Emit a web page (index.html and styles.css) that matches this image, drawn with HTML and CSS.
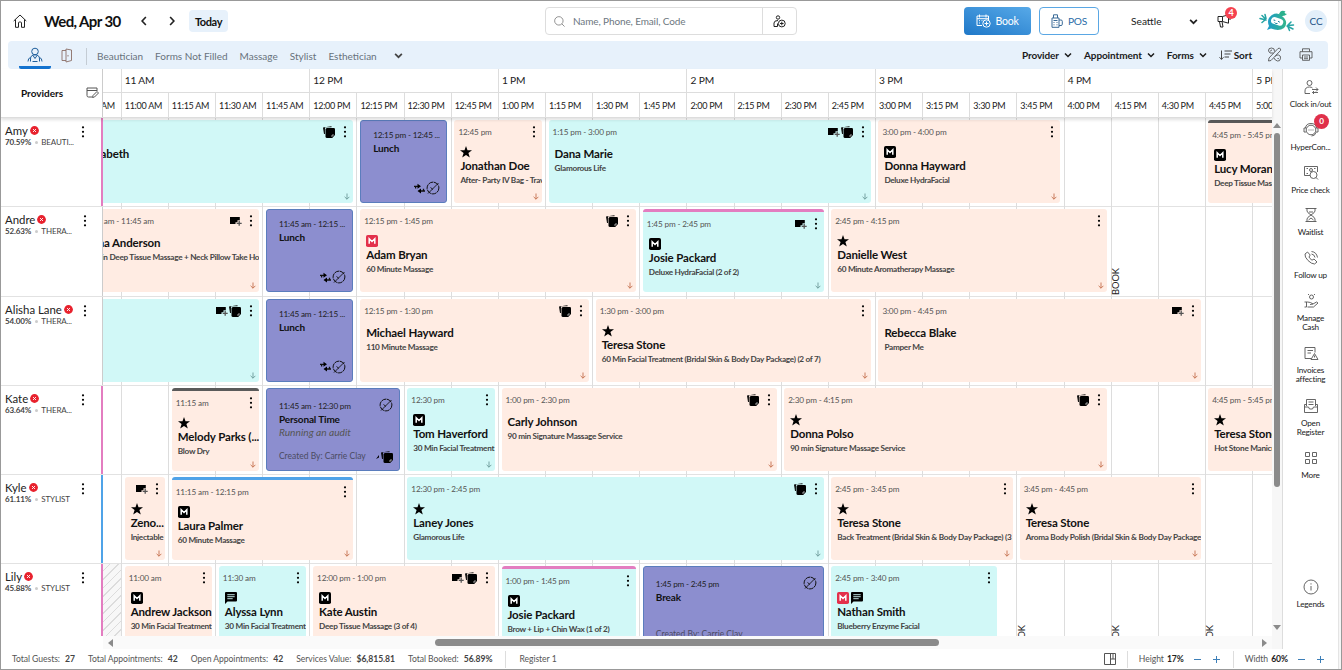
FILE: index.html
```
<!DOCTYPE html>
<html lang="en">

<head>
	<meta charset="UTF-8">
	<meta name="viewport" content="width=device-width, initial-scale=1.0">
	<title>Appointment Book</title>
	<link rel="stylesheet" href="styles.css">
</head>

<body>
	<!-- shared icons -->
	<svg class="sprite" width="0" height="0">
		<symbol id="dots" viewBox="0 0 4 14"><circle cx="2" cy="2.3" r="1.1"/><circle cx="2" cy="6.8" r="1.1"/><circle cx="2" cy="11.3" r="1.1"/></symbol>
		<symbol id="chevron" viewBox="0 0 8 8"><path d="M1 2.5l3 3 3-3" fill="none" stroke="currentColor" stroke-width="1.5"/></symbol>
		<symbol id="notes" viewBox="0 0 12 12"><path d="M0 1.500L8.500.2v1H3Q1.900 1.200 1.900 2.500V8H1z"/><path d="M4 2h6.800Q12 2 12 3.200V9L9.200 12H4Q2.500 12 2.500 10.500V3.500Q2.500 2 4 2z"/><path d="M9 11V9h2" fill="none" stroke="#fff" stroke-width=".6"/></symbol>
		<symbol id="cardplus" viewBox="0 0 12 10"><path d="M0 1h9.800v3.200H7.500v2H5.500V8H0z"/><path d="M9.200 4.800v5M6.700 7.300h5" stroke="currentColor" stroke-width="1.300"/></symbol>
		<symbol id="star" viewBox="0 0 12 12"><path d="M6 0l1.500 4.300H12L8.400 7l1.400 4.600L6 8.900l-3.800 2.700L3.600 7 0 4.300h4.500z"/></symbol>
		<symbol id="chat" viewBox="0 0 12 12"><path d="M1 0h10q1 0 1 1v7.500q0 1-1 1H2.500L0 12V1q0-1 1-1z"/><path d="M2.300 2.700h7.400M2.300 4.700h7.400M2.300 6.700h5.400" stroke="#d1f8f7" stroke-width=".9"/></symbol>
		<symbol id="member" viewBox="0 0 12 12"><rect width="12" height="12" rx="1.800"/><path d="M3.200 8.800V3.700L6 6.500l2.800-2.800v5.100" fill="none" stroke="#fff" stroke-width="1.500"/></symbol>
		<symbol id="down" viewBox="0 0 6 7"><path d="M3 .5v5.700M.6 3.800L3 6.200l2.400-2.400" fill="none" stroke="currentColor" stroke-width=".9"/></symbol>
		<symbol id="swap" viewBox="0 0 11 11"><path d="M0 3.300h4M1.600 3v2.500M11 8H6.500M9.500 8V5.800" fill="none" stroke="currentColor" stroke-width="1.300"/><path d="M3.500.8L7 3.300 3.500 5.800zM7 5.500v5L3.500 8z"/></symbol>
		<symbol id="blocked" viewBox="0 0 14 14"><circle cx="7" cy="7" r="5.900" fill="none" stroke="currentColor" stroke-dasharray="5 .6"/><path d="M2 12.500L12.500 2M4.500 6.500L7 8.500" fill="none" stroke="currentColor" stroke-width=".9"/></symbol>
		<symbol id="cross" viewBox="0 0 9 9"><circle cx="4.500" cy="4.500" r="4.400" fill="#e8222e"/><path d="M3 3l3 3M6 3L3 6" stroke="#fff" stroke-width=".9"/></symbol>
	</svg>

	<div class="app">
		<header class="topbar">
			<svg class="home" viewBox="0 0 14 14"><path d="M.7 7L7 1l6.300 6M2.500 5.600v7.700h3V9q0-1 1-1h1q1 0 1 1v4.300h3V5.600"/></svg>
			<h1>Wed, Apr 30</h1>
			<svg class="arrow prev" viewBox="0 0 8 8"><path d="M5.500.8L2.500 4l3 3.200"/></svg>
			<svg class="arrow next" viewBox="0 0 8 8"><path d="M2.500.8l3 3.200-3 3.200"/></svg>
			<button class="today">Today</button>
			<div class="search">
				<svg class="lens" viewBox="0 0 12 12"><circle cx="5.300" cy="5.300" r="4.600"/><path d="M8.600 8.600L11.500 11.500"/></svg>
				<span>Name, Phone, Email, Code</span>
				<div class="add-guest">
					<svg viewBox="0 0 13 13"><circle cx="5" cy="2.500" r="1.700"/><path d="M4.500 11.500H1V8q0-2.500 4-2.500M4.500 8.500v3"/><circle cx="8.800" cy="8.500" r="3.400"/><path d="M7 8.500h3.600M8.800 6.700v3.600"/></svg>
				</div>
			</div>
			<button class="book">
				<svg viewBox="0 0 15 14"><path d="M6 11.500H1V2h11.500v4M1 4.700h11.500M3.500.5v3M10 .5v3M3 6.700h1M5.500 6.700h1M3 9h1"/><circle cx="10.500" cy="9.500" r="3.700"/><path d="M8.500 9.500h4M10.500 7.500v4"/></svg>
				Book
			</button>
			<button class="pos">
				<svg viewBox="0 0 12 14"><path d="M2.500 4V.8h4V4M1 4h7v9.300H1zM8 6h2q1.300 0 1.300 1.300v3q0 1.200-1.300 1.200H8M2.500 6.500h4M2.500 8.500h1M5.500 8.500h1M2.500 10.800h1M5.500 10.800h1"/></svg>
				POS
			</button>
			<div class="center">Seattle <svg><use href="#chevron"/></svg></div>
			<div class="news">
				<svg viewBox="0 0 15 14"><path d="M1 2.500h4.500v5H1zM5.500 2.500L11.500.8v8.400L5.500 7.500M2.500 7.500L3.500 13H6L5 7.500M12 5h2"/></svg>
				<b>4</b>
			</div>
			<svg class="mascot" viewBox="0 0 36 22">
				<defs><linearGradient id="teal"><stop offset="0" stop-color="#1e9bc9"/><stop offset="1" stop-color="#34b58a"/></linearGradient></defs>
				<path d="M13 5q6-3.500 10.500 1.500Q30 12 25 18q-5 3.500-13 .5L8 20l2-4Q7 9 13 5z" fill="url(#teal)"/>
				<path d="M20 4q2-5 6.500-2.500Q24 3.500 28 4q-3 3-7 1.500z" fill="#2ab08c"/>
				<rect x="12" y="7.800" width="12.500" height="7" rx="3.500" fill="#fff" transform="rotate(18 18 11)"/>
				<path d="M14.500 10q1.500-.5 1.500 1M19 11.500q1.500-.5 1.500 1M15.500 12.500q1 1.500 3 1" stroke="#1e87a0" fill="none"/>
				<path d="M7 10L1 8.500M6.500 9L3 5.500M7 8.500L6 4.500M6 10l-3 2.500M28 16l6 3M29 15.500l5.500-.5M29 15l3-3M29 17l1.500 3.500" stroke="#25a4a4" stroke-width="1.500" stroke-linecap="round"/>
			</svg>
			<div class="avatar">CC</div>
		</header>

		<nav class="toolbar">
			<div class="tab active">
				<svg viewBox="0 0 16 16"><circle cx="8" cy="4.500" r="3.300"/><path d="M3.500 14.500V12q0-4.200 4.500-4.200t4.500 4.200v2.500M6 8.500l2 3 2-3M3.500 10.500Q1 11 1 14.500M12.500 10.500Q15 11 15 14.500M5.500 14.500h5"/></svg>
			</div>
			<svg class="door" viewBox="0 0 12 15"><path d="M5 2.500H1v10h4M5 1l5.500 1v10.500L5 14zM7 7v1.500"/></svg>
			<ul class="filters">
				<li>Beautician</li>
				<li>Forms Not Filled</li>
				<li>Massage</li>
				<li>Stylist</li>
				<li>Esthetician</li>
			</ul>
			<svg class="more-filters"><use href="#chevron"/></svg>
			<div class="menus">
				<span>Provider <svg><use href="#chevron"/></svg></span>
				<span>Appointment <svg><use href="#chevron"/></svg></span>
				<span>Forms <svg><use href="#chevron"/></svg></span>
				<span class="sort"><svg viewBox="0 0 13 10"><path d="M2.500.5v9M.5 7.300l2 2 2-2M5.500 1H13M5.500 4h6M5.500 7h4.500"/></svg>Sort</span>
				<svg class="tools" viewBox="0 0 15 15"><path d="M2 11L11 1.500q2-1 2.500.5T13 4L4 13.500l-2.500.5zM6.500 6Q2 7 1.500 4T4.500 1q3.500 0 3 3.500M8.500 9.500q.5-2 3-1.500t2 3.500-3 2.500-3.500-3M3.300 4.500Q3.500 3 5 3M10.500 11.500q1 .5 1.500-.5"/></svg>
				<svg class="print" viewBox="0 0 14 13"><path d="M3.500 3.500V.8h7v2.700M3.500 10H1V3.700h12V10h-2.500M3.500 7h7v5.300h-7zM5 9h4M5 10.700h4"/></svg>
			</div>
		</nav>

		<main>
			<section class="scheduler">
				<div class="head">
					<div class="head-providers">
						<b>Providers</b>
						<svg viewBox="0 0 13 12"><path d="M6 10H2.500Q1 10 1 8.500V1h10v3M1 3.500h10M6.500 10.500l.5-2 4-4L12.500 6l-4 4z"/></svg>
					</div>
					<div class="times">
						<div class="hours">
							<span></span><span>11 AM</span><span>12 PM</span><span>1 PM</span><span>2 PM</span><span>3 PM</span><span>4 PM</span><span>5 PM</span>
						</div>
						<div class="quarters">
							<span></span><span>10:45 AM</span>
							<span>11:00 AM</span><span>11:15 AM</span><span>11:30 AM</span><span>11:45 AM</span>
							<span>12:00 PM</span><span>12:15 PM</span><span>12:30 PM</span><span>12:45 PM</span>
							<span>1:00 PM</span><span>1:15 PM</span><span>1:30 PM</span><span>1:45 PM</span>
							<span>2:00 PM</span><span>2:15 PM</span><span>2:30 PM</span><span>2:45 PM</span>
							<span>3:00 PM</span><span>3:15 PM</span><span>3:30 PM</span><span>3:45 PM</span>
							<span>4:00 PM</span><span>4:15 PM</span><span>4:30 PM</span><span>4:45 PM</span>
							<span>5:00 PM</span>
						</div>
					</div>
				</div>

				<div class="body">
					<div class="lines">
						<i></i><i></i><i></i><i></i><i></i><i></i><i></i><i></i><i></i><i></i><i></i><i></i><i></i><i></i><i></i><i></i><i></i><i></i><i></i><i></i><i></i><i></i><i></i><i></i><i></i><i></i><i></i>
					</div>
					<div class="rows">

						<div class="row">
							<div class="provider pink">
								<p>Amy <svg><use href="#cross"/></svg></p>
								<small><b>70.59%</b><i></i>BEAUTI...</small>
								<svg class="menu"><use href="#dots"/></svg>
							</div>
							<div class="lane">
								<article class="appt cyan" style="grid-column: 4 / 22">
									<div class="line"><time></time><svg class="notes"><use href="#notes"/></svg><svg class="dots"><use href="#dots"/></svg></div>
									<h3>Elizabeth</h3>
									<svg class="down"><use href="#down"/></svg>
								</article>
								<article class="block" style="grid-column: 22 / 28">
									<time>12:15 pm - 12:45 ...</time>
									<h3>Lunch</h3>
									<div class="corner"><svg class="swap"><use href="#swap"/></svg><svg class="blocked"><use href="#blocked"/></svg></div>
								</article>
								<article class="appt" style="grid-column: 28 / 34">
									<div class="line"><time>12:45 pm</time><svg class="dots"><use href="#dots"/></svg></div>
									<div class="tags"><svg><use href="#star"/></svg></div>
									<h3>Jonathan Doe</h3>
									<p>After- Party IV Bag - Travel</p>
									<svg class="down"><use href="#down"/></svg>
								</article>
								<article class="appt cyan" style="grid-column: 34 / 55">
									<div class="line"><time>1:15 pm - 3:00 pm</time><svg class="card"><use href="#cardplus"/></svg><svg class="notes"><use href="#notes"/></svg><svg class="dots"><use href="#dots"/></svg></div>
									<h3>Dana Marie</h3>
									<p>Glamorous Life</p>
									<svg class="down"><use href="#down"/></svg>
								</article>
								<article class="appt" style="grid-column: 55 / 67">
									<div class="line"><time>3:00 pm - 4:00 pm</time><svg class="dots"><use href="#dots"/></svg></div>
									<div class="tags"><svg><use href="#member"/></svg></div>
									<h3>Donna Hayward</h3>
									<p>Deluxe HydraFacial</p>
									<svg class="down"><use href="#down"/></svg>
								</article>
								<article class="appt bar-dark" style="grid-column: 76 / 88">
									<div class="line"><time>4:45 pm - 5:45 pm</time></div>
									<div class="tags"><svg><use href="#member"/></svg></div>
									<h3>Lucy Moran</h3>
									<p>Deep Tissue Massage</p>
								</article>
							</div>
						</div>

						<div class="row">
							<div class="provider">
								<p>Andre <svg><use href="#cross"/></svg></p>
								<small><b>52.63%</b><i></i>THERA...</small>
								<svg class="menu"><use href="#dots"/></svg>
							</div>
							<div class="lane">
								<article class="appt" style="grid-column: 4 / 16">
									<div class="line"><time>10:45 am - 11:45 am</time><svg class="card"><use href="#cardplus"/></svg><svg class="dots"><use href="#dots"/></svg></div>
									<h3>Anna Anderson</h3>
									<p>90 Min Deep Tissue Massage + Neck Pillow Take Home</p>
									<svg class="down"><use href="#down"/></svg>
								</article>
								<article class="block" style="grid-column: 16 / 22">
									<time>11:45 am - 12:15 ...</time>
									<h3>Lunch</h3>
									<div class="corner"><svg class="swap"><use href="#swap"/></svg><svg class="blocked"><use href="#blocked"/></svg></div>
								</article>
								<article class="appt" style="grid-column: 22 / 40">
									<div class="line"><time>12:15 pm - 1:45 pm</time><svg class="notes"><use href="#notes"/></svg><svg class="dots"><use href="#dots"/></svg></div>
									<div class="tags"><svg class="red"><use href="#member"/></svg></div>
									<h3>Adam Bryan</h3>
									<p>60 Minute Massage</p>
									<svg class="down"><use href="#down"/></svg>
								</article>
								<article class="appt cyan bar-pink" style="grid-column: 40 / 52">
									<div class="line"><time>1:45 pm - 2:45 pm</time><svg class="card"><use href="#cardplus"/></svg><svg class="dots"><use href="#dots"/></svg></div>
									<div class="tags"><svg><use href="#member"/></svg></div>
									<h3>Josie Packard</h3>
									<p>Deluxe HydraFacial (2 of 2)</p>
									<svg class="down"><use href="#down"/></svg>
								</article>
								<article class="appt" style="grid-column: 52 / 70">
									<div class="line"><time>2:45 pm - 4:15 pm</time><svg class="dots"><use href="#dots"/></svg></div>
									<div class="tags"><svg><use href="#star"/></svg></div>
									<h3>Danielle West</h3>
									<p>60 Minute Aromatherapy Massage</p>
									<svg class="down"><use href="#down"/></svg>
								</article>
								<span class="free" style="grid-column: 70 / 73">BOOK</span>
							</div>
						</div>

						<div class="row">
							<div class="provider">
								<p>Alisha Lane <svg><use href="#cross"/></svg></p>
								<small><b>54.00%</b><i></i>THERA...</small>
								<svg class="menu"><use href="#dots"/></svg>
							</div>
							<div class="lane">
								<article class="appt cyan" style="grid-column: 1 / 16">
									<div class="line"><time></time><svg class="card"><use href="#cardplus"/></svg><svg class="notes"><use href="#notes"/></svg><svg class="dots"><use href="#dots"/></svg></div>
									<svg class="down"><use href="#down"/></svg>
								</article>
								<article class="block" style="grid-column: 16 / 22">
									<time>11:45 am - 12:15 ...</time>
									<h3>Lunch</h3>
									<div class="corner"><svg class="swap"><use href="#swap"/></svg><svg class="blocked"><use href="#blocked"/></svg></div>
								</article>
								<article class="appt" style="grid-column: 22 / 37">
									<div class="line"><time>12:15 pm - 1:30 pm</time><svg class="notes"><use href="#notes"/></svg><svg class="dots"><use href="#dots"/></svg></div>
									<h3>Michael Hayward</h3>
									<p>110 Minute Massage</p>
									<svg class="down"><use href="#down"/></svg>
								</article>
								<article class="appt" style="grid-column: 37 / 55">
									<div class="line"><time>1:30 pm - 3:00 pm</time><svg class="dots"><use href="#dots"/></svg></div>
									<div class="tags"><svg><use href="#star"/></svg></div>
									<h3>Teresa Stone</h3>
									<p>60 Min Facial Treatment (Bridal Skin &amp; Body Day Package) (2 of 7)</p>
									<svg class="down"><use href="#down"/></svg>
								</article>
								<article class="appt" style="grid-column: 55 / 76">
									<div class="line"><time>3:00 pm - 4:45 pm</time><svg class="card"><use href="#cardplus"/></svg><svg class="dots"><use href="#dots"/></svg></div>
									<h3>Rebecca Blake</h3>
									<p>Pamper Me</p>
									<svg class="down"><use href="#down"/></svg>
								</article>
							</div>
						</div>

						<div class="row">
							<div class="provider pink">
								<p>Kate <svg><use href="#cross"/></svg></p>
								<small><b>63.64%</b><i></i>THERA...</small>
								<svg class="menu"><use href="#dots"/></svg>
							</div>
							<div class="lane">
								<article class="appt bar-dark" style="grid-column: 10 / 16">
									<div class="line"><time>11:15 am</time><svg class="dots"><use href="#dots"/></svg></div>
									<div class="tags"><svg><use href="#star"/></svg></div>
									<h3>Melody Parks (...</h3>
									<p>Blow Dry</p>
									<svg class="down"><use href="#down"/></svg>
								</article>
								<article class="block wide" style="grid-column: 16 / 25">
									<time>11:45 am - 12:30 pm</time>
									<h3>Personal Time</h3>
									<em>Running an audit</em>
									<small>Created By: Carrie Clay</small>
									<svg class="blocked top"><use href="#blocked"/></svg>
									<div class="corner"><svg class="tick" viewBox="0 0 4 4"><path d="M0 4L3 0v2.500z"/></svg><svg class="notes"><use href="#notes"/></svg></div>
								</article>
								<article class="appt cyan" style="grid-column: 25 / 31">
									<div class="line"><time>12:30 pm</time><svg class="dots"><use href="#dots"/></svg></div>
									<div class="tags"><svg><use href="#member"/></svg></div>
									<h3>Tom Haverford</h3>
									<p>30 Min Facial Treatment</p>
									<svg class="down"><use href="#down"/></svg>
								</article>
								<article class="appt" style="grid-column: 31 / 49">
									<div class="line"><time>1:00 pm - 2:30 pm</time><svg class="notes"><use href="#notes"/></svg><svg class="dots"><use href="#dots"/></svg></div>
									<h3>Carly Johnson</h3>
									<p>90 min Signature Massage Service</p>
									<svg class="down"><use href="#down"/></svg>
								</article>
								<article class="appt" style="grid-column: 49 / 70">
									<div class="line"><time>2:30 pm - 4:15 pm</time><svg class="notes"><use href="#notes"/></svg><svg class="dots"><use href="#dots"/></svg></div>
									<div class="tags"><svg><use href="#star"/></svg></div>
									<h3>Donna Polso</h3>
									<p>90 min Signature Massage Service</p>
									<svg class="down"><use href="#down"/></svg>
								</article>
								<article class="appt" style="grid-column: 76 / 88">
									<div class="line"><time>4:45 pm - 5:45 pm</time></div>
									<div class="tags"><svg><use href="#star"/></svg></div>
									<h3>Teresa Stone</h3>
									<p>Hot Stone Manicure</p>
								</article>
							</div>
						</div>

						<div class="row">
							<div class="provider blue">
								<p>Kyle <svg><use href="#cross"/></svg></p>
								<small><b>61.11%</b><i></i>STYLIST</small>
								<svg class="menu"><use href="#dots"/></svg>
							</div>
							<div class="lane">
								<article class="appt" style="grid-column: 7 / 10">
									<div class="line"><time></time><svg class="card"><use href="#cardplus"/></svg><svg class="dots"><use href="#dots"/></svg></div>
									<div class="tags"><svg><use href="#star"/></svg></div>
									<h3>Zeno...</h3>
									<p>Injectable</p>
									<svg class="down"><use href="#down"/></svg>
								</article>
								<article class="appt bar-blue" style="grid-column: 10 / 22">
									<div class="line"><time>11:15 am - 12:15 pm</time><svg class="dots"><use href="#dots"/></svg></div>
									<div class="tags"><svg><use href="#member"/></svg></div>
									<h3>Laura Palmer</h3>
									<p>60 Minute Massage</p>
									<svg class="down"><use href="#down"/></svg>
								</article>
								<article class="appt cyan" style="grid-column: 25 / 52">
									<div class="line"><time>12:30 pm - 2:45 pm</time><svg class="notes"><use href="#notes"/></svg><svg class="dots"><use href="#dots"/></svg></div>
									<div class="tags"><svg><use href="#star"/></svg></div>
									<h3>Laney Jones</h3>
									<p>Glamorous Life</p>
									<svg class="down"><use href="#down"/></svg>
								</article>
								<article class="appt" style="grid-column: 52 / 64">
									<div class="line"><time>2:45 pm - 3:45 pm</time><svg class="dots"><use href="#dots"/></svg></div>
									<div class="tags"><svg><use href="#star"/></svg></div>
									<h3>Teresa Stone</h3>
									<p>Back Treatment (Bridal Skin &amp; Body Day Package) (3</p>
									<svg class="down"><use href="#down"/></svg>
								</article>
								<article class="appt" style="grid-column: 64 / 76">
									<div class="line"><time>3:45 pm - 4:45 pm</time><svg class="dots"><use href="#dots"/></svg></div>
									<div class="tags"><svg><use href="#star"/></svg></div>
									<h3>Teresa Stone</h3>
									<p>Aroma Body Polish (Bridal Skin &amp; Body Day Package)</p>
									<svg class="down"><use href="#down"/></svg>
								</article>
							</div>
						</div>

						<div class="row">
							<div class="provider pink">
								<p>Lily <svg><use href="#cross"/></svg></p>
								<small><b>45.88%</b><i></i>STYLIST</small>
								<svg class="menu"><use href="#dots"/></svg>
							</div>
							<div class="lane">
								<div class="off" style="grid-column: 1 / 7"></div>
								<article class="appt" style="grid-column: 7 / 13">
									<div class="line"><time>11:00 am</time><svg class="dots"><use href="#dots"/></svg></div>
									<div class="tags"><svg><use href="#member"/></svg></div>
									<h3>Andrew Jackson</h3>
									<p>30 Min Facial Treatment</p>
								</article>
								<article class="appt cyan" style="grid-column: 13 / 19">
									<div class="line"><time>11:30 am</time><svg class="dots"><use href="#dots"/></svg></div>
									<div class="tags"><svg><use href="#chat"/></svg></div>
									<h3>Alyssa Lynn</h3>
									<p>30 Min Facial Treatment</p>
								</article>
								<article class="appt" style="grid-column: 19 / 31">
									<div class="line"><time>12:00 pm - 1:00 pm</time><svg class="card"><use href="#cardplus"/></svg><svg class="notes"><use href="#notes"/></svg><svg class="dots"><use href="#dots"/></svg></div>
									<div class="tags"><svg><use href="#member"/></svg></div>
									<h3>Kate Austin</h3>
									<p>Deep Tissue Massage (3 of 4)</p>
								</article>
								<article class="appt cyan bar-pink" style="grid-column: 31 / 40">
									<div class="line"><time>1:00 pm - 1:45 pm</time><svg class="dots"><use href="#dots"/></svg></div>
									<div class="tags"><svg><use href="#member"/></svg></div>
									<h3>Josie Packard</h3>
									<p>Brow + Lip + Chin Wax (1 of 2)</p>
								</article>
								<article class="block wide" style="grid-column: 40 / 52">
									<time>1:45 pm - 2:45 pm</time>
									<h3>Break</h3>
									<small>Created By: Carrie Clay</small>
									<svg class="blocked top"><use href="#blocked"/></svg>
								</article>
								<article class="appt cyan" style="grid-column: 52 / 63">
									<div class="line"><time>2:45 pm - 3:40 pm</time><svg class="dots"><use href="#dots"/></svg></div>
									<div class="tags"><svg class="red"><use href="#member"/></svg><svg><use href="#chat"/></svg></div>
									<h3>Nathan Smith</h3>
									<p>Blueberry Enzyme Facial</p>
								</article>
								<span class="free" style="grid-column: 64 / 67">BOOK</span>
								<span class="free" style="grid-column: 70 / 73">BOOK</span>
								<span class="free" style="grid-column: 76 / 79">BOOK</span>
							</div>
						</div>

					</div>
				</div>

				<div class="hscroll">
					<i class="tri left"></i>
					<i class="thumb"></i>
					<i class="tri right"></i>
				</div>
			</section>

			<div class="vscroll">
				<i class="tri up"></i>
				<i class="thumb"></i>
				<i class="tri bottom"></i>
			</div>

			<aside class="side">
				<a><svg viewBox="0 0 16 16"><circle cx="6.500" cy="4" r="2.500"/><path d="M7 14.500H2V12q0-4 4.500-4 2 0 3 1M9 10.500h6M13 8.500l2 2-2 2M15 13.500H9.500M11 12l-1.500 1.500L11 15"/></svg>Clock in/out</a>
				<a><svg viewBox="0 0 16 16"><circle cx="8" cy="8" r="4.800"/><path d="M2.500 6Q3 1.500 8 1.500T13.500 6M3 6H1v4h2M13 6h2v4h-2M5.500 8h1M7.500 8h1M9.500 8h1M13 10.500Q12 14 8.500 14"/></svg>HyperCon...<b class="count">0</b></a>
				<a><svg viewBox="0 0 16 16"><path d="M7 10.500H1.500v-9h13V7M3.500 3.500h1.500M11 3.500h1.500M3.500 8.500H5"/><circle cx="8" cy="5" r="1.500"/><circle cx="10.500" cy="10" r="3.500"/><path d="M13 12.500l2 2"/></svg>Price check</a>
				<a><svg viewBox="0 0 16 16"><path d="M2.500 1.500h11M2.500 14.500h11M4 1.500V4q0 1.500 4 4 4-2.500 4-4V1.500M4 14.500V12q0-1.500 4-4 4 2.500 4 4v2.500M6 5h4M5.500 13l2.500-2 2.500 2"/></svg>Waitlist</a>
				<a><svg viewBox="0 0 16 16"><path d="M4.500 2L2 4q-.5 3 3 6.500T11.500 14l2.500-2-3-3-2 1.200Q6.500 8.500 6 7l1.200-2zM8.500 1.500q5 .5 6 6M8.500 4q3 .5 3.500 3.500"/></svg>Follow up</a>
				<a class="two"><svg viewBox="0 0 16 16"><circle cx="8.500" cy="4" r="2"/><path d="M5 1.500h1M11 1.500h1M1.500 9h3l3 .5 2.500 1.500-3 .5M4.500 14h6l4.500-4-1.500-1L10 11M1.500 14h2V9"/></svg>Manage Cash</a>
				<a class="two"><svg viewBox="0 0 16 16"><path d="M8 13.500H2v-11h10v5M4.500 5.500H10M4.500 8H8"/><path d="M11.500 8.500L15 14.500H8zM11.500 10.500v2"/></svg>Invoices affecting</a>
				<a class="two"><svg viewBox="0 0 16 16"><path d="M3.500 8V1.500h9V8M1.500 9V6.500h2M14.500 9V6.500h-2M1.500 9h4l1 2h3l1-2h4v5.500h-13zM5.500 4h5M5.500 6.500h5"/></svg>Open Register</a>
				<a><svg viewBox="0 0 16 16"><path d="M2.500 2.500h4v4h-4zM9.500 2.500h4v4h-4zM2.500 9.500h4v4h-4zM9.500 9.500h4v4h-4z"/></svg>More</a>
				<a class="legends"><svg viewBox="0 0 16 16"><circle cx="8" cy="8" r="7"/><path d="M8 7v4.500M8 4.300v1.200"/></svg>Legends</a>
			</aside>
		</main>

		<footer>
			<span>Total Guests: <b>27</b></span>
			<span>Total Appointments: <b>42</b></span>
			<span>Open Appointments: <b>42</b></span>
			<span>Services Value: <b>$6,815.81</b></span>
			<span>Total Booked: <b>56.89%</b></span>
			<span class="register">Register 1</span>
			<div class="zoom">
				<svg viewBox="0 0 12 12"><path d="M.5.500h11v11H.5zM6.500.5v11M6.500 6h5M9 .5V6"/></svg>
				<div class="step">Height <b>17%</b><i class="minus"></i><i class="plus"></i></div>
				<div class="step">Width <b>60%</b><i class="minus"></i><i class="plus"></i></div>
			</div>
		</footer>
	</div>
</body>

</html>
```
FILE: styles.css
```
* {
	box-sizing: border-box;
}

body {
	margin: 0;
	font-family: Lato, "Liberation Sans", sans-serif;
	font-size: 10px;
	color: #222;
	background: #f5f5f5;
}

h1, h3, p, ul {
	margin: 0;
	padding: 0;
}

svg {
	display: block;
	flex: none;
}

.sprite {
	position: absolute;
}

.app {
	width: 1342px;
	height: 670px;
	border: 1px solid #999;
	display: flex;
	flex-direction: column;
	overflow: hidden;
	background: linear-gradient(to right, #fff 1337px, #e4e4e4 1337px, #e4e4e4 1338px, #f6f6f6 1338px);
}

/* top bar */
.topbar {
	height: 40px;
	flex: none;
	display: flex;
	align-items: center;
	padding-left: 12px;
}

.topbar svg {
	fill: none;
	stroke: #222;
}

.home {
	width: 14px;
	height: 14px;
}

h1 {
	width: 95px;
	margin-left: 17px;
	font-size: 15px;
	letter-spacing: -0.6px;
	white-space: nowrap;
	color: #111;
}

.arrow {
	width: 10px;
	height: 10px;
	stroke-width: 1.300;
}

.next {
	margin-left: 18px;
}

button {
	font-family: inherit;
	border: none;
	border-radius: 4px;
	display: flex;
	align-items: center;
	justify-content: center;
}

.today {
	width: 39px;
	height: 22px;
	margin-left: 12px;
	padding: 0;
	background: #e7f1fb;
	font-size: 11px;
	font-weight: 700;
	letter-spacing: -0.4px;
	color: #111;
}

.search {
	width: 252px;
	height: 28px;
	margin-left: 317px;
	border: 1px solid #ddd;
	border-radius: 4px;
	display: flex;
	align-items: center;
	padding-left: 8px;
	color: #6d7780;
}

.search span {
	flex: 1;
	margin-left: 8px;
	letter-spacing: -0.12px;
}

.topbar .lens {
	width: 11px;
	height: 11px;
	stroke: #888;
}

.add-guest {
	width: 34px;
	height: 26px;
	border-left: 1px solid #ddd;
	display: flex;
	align-items: center;
	justify-content: center;
}

.add-guest svg {
	width: 13px;
	height: 13px;
}

.book {
	width: 67px;
	height: 28px;
	margin-left: 167px;
	padding: 0;
	gap: 4px;
	font-size: 10.500px;
	letter-spacing: -0.2px;
	color: #fff;
	background: linear-gradient(20deg, #1f78c8, #57a9e8);
}

.topbar .book svg {
	width: 15px;
	height: 14px;
	stroke: #fff;
}

.pos {
	width: 60px;
	height: 28px;
	margin-left: 8px;
	padding: 0;
	gap: 5px;
	font-size: 10.200px;
	letter-spacing: -0.3px;
	color: #2a6ca8;
	background: #fff;
	border: 1px solid #5aa7e4;
}

.topbar .pos svg {
	width: 12px;
	height: 14px;
	stroke: #3a6b98;
}

.center {
	width: 67px;
	margin-left: 32px;
	display: flex;
	align-items: center;
	justify-content: space-between;
	font-size: 10.200px;
}

.center svg {
	width: 9px;
	height: 9px;
}

.news {
	position: relative;
	margin-left: 19px;
}

.news svg {
	width: 15px;
	height: 14px;
}

.news b {
	position: absolute;
	left: 8px;
	top: -7px;
	width: 12px;
	height: 12px;
	border-radius: 50%;
	background: #f5424f;
	color: #fff;
	font-size: 9px;
	line-height: 12px;
	text-align: center;
}

.topbar .mascot {
	width: 36px;
	height: 22px;
	margin-left: 27px;
	stroke: none;
}

.avatar {
	width: 22px;
	height: 22px;
	margin-left: 10px;
	border-radius: 50%;
	background: #e3effa;
	color: #1c5285;
	line-height: 22px;
	text-align: center;
	font-size: 10px;
}

/* toolbar */
.toolbar {
	height: 28px;
	flex: none;
	margin: 0 13px 0 7px;
	border-radius: 4px;
	background: #e7f1fb;
	display: flex;
	align-items: center;
}

.toolbar svg {
	fill: none;
	stroke: #444;
}

.tab {
	width: 32px;
	height: 28px;
	margin-left: 11px;
	padding-top: 6px;
	border-bottom: 3px solid #1272cf;
	border-radius: 0 0 2px 2px;
}

.tab svg {
	width: 16px;
	height: 16px;
	margin: 0 auto;
	stroke: #1f5f9c;
}

.toolbar .door {
	width: 12px;
	height: 15px;
	margin-left: 10px;
	stroke: #8a6e66;
	stroke-width: .9;
}

.filters {
	display: flex;
	gap: 12px;
	list-style: none;
	margin-left: 13px;
	margin-top: 2px;
	padding-left: 10px;
	border-left: 1px solid #c4ccd4;
	line-height: 17px;
	color: #68727b;
}

.toolbar .more-filters {
	width: 9px;
	height: 9px;
	margin-left: 17px;
	color: #444;
}

.menus {
	margin-left: auto;
	margin-bottom: 1px;
	display: flex;
	align-items: center;
	font-weight: 700;
	letter-spacing: -0.1px;
	color: #1a1a1a;
}

.menus span {
	display: flex;
	align-items: center;
	gap: 5px;
	margin-right: 12px;
}

.menus span svg {
	width: 8px;
	height: 8px;
}

.menus .sort {
	margin-right: 15px;
	gap: 2px;
}

.menus .sort svg {
	width: 13px;
	height: 10px;
}

.menus .tools {
	width: 15px;
	height: 15px;
	stroke-width: .8;
}

.menus .print {
	width: 14px;
	height: 13px;
	margin: 0 15px 0 17px;
	stroke-width: .8;
}

/* scheduler */
main {
	height: 580px;
	flex: none;
	display: flex;
}

.scheduler {
	width: 1271px;
	height: 580px;
	display: flex;
	flex-direction: column;
}

.head {
	height: 49px;
	flex: none;
	display: flex;
	border-bottom: 1px solid #ddd;
	box-shadow: 0 2px 3px rgba(0, 0, 0, .12);
	z-index: 1;
}

.head-providers {
	width: 102px;
	border-right: 1px solid #ccc;
	display: flex;
	align-items: center;
	padding-left: 20px;
}

.head-providers b {
	width: 65px;
	font-size: 10px;
	color: #111;
}

.head-providers svg {
	width: 13px;
	height: 12px;
	fill: none;
	stroke: #555;
}

.times {
	flex: 1;
	overflow: hidden;
}

.hours, .quarters {
	display: grid;
	margin-left: -76.6px;
	white-space: nowrap;
}

/* 94.3px = the half hour before 11 AM */
.hours {
	grid-template-columns: 94.3px repeat(7, 188.6px);
	height: 24px;
	border-bottom: 1px solid #ddd;
	font-size: 10.200px;
	letter-spacing: -0.15px;
	line-height: 22px;
}

.quarters {
	grid-template-columns: repeat(27, 47.15px);
	height: 25px;
	line-height: 25px;
	font-size: 9px;
	letter-spacing: -0.28px;
}

.hours span, .quarters span {
	border-left: 1px solid #ddd;
	padding-left: 3px;
}

.body {
	flex: 1;
	min-height: 0;
	overflow: hidden;
	display: grid;
	grid-template: auto / 1271px;
}

.lines, .rows {
	grid-area: 1 / 1;
}

.lines {
	margin-left: 102px;
	overflow: hidden;
	display: grid;
	grid-template-columns: repeat(27, 47.15px);
	height: 536px;
}

.lines i {
	position: relative;
	left: -76.6px;
	border-left: 1px solid #ddd;
}

.row {
	display: flex;
	height: 89.3px;
	border-bottom: 1px solid #e2e2e2;
}

.provider {
	width: 102px;
	flex: none;
	position: relative;
	padding: 6px 0 0 4px;
	background: #fff;
	border-right: 1px solid #ccc;
}

.provider.pink {
	border-right: 2px solid #e37dc0;
}

.provider.blue {
	border-right: 2px solid #4fa3e8;
}

.provider p {
	display: flex;
	align-items: center;
	gap: 2px;
	font-size: 11.400px;
	line-height: 13px;
	color: #222;
}

.provider p svg {
	width: 9px;
	height: 9px;
}

.provider small {
	display: flex;
	align-items: center;
	font-size: 8px;
	line-height: 11px;
	letter-spacing: -0.12px;
	color: #444;
}

.provider small i {
	width: 3px;
	height: 3px;
	border-radius: 50%;
	background: #ccc;
	margin: 0 3px 0 4px;
}

.provider .menu {
	position: absolute;
	right: 15px;
	top: 7px;
	width: 4px;
	height: 14px;
}

.provider.pink .menu, .provider.blue .menu {
	right: 16px;
}

/* one column = 5 minutes, starting at 10:30 */
.lane {
	flex: 1;
	min-width: 0;
	overflow: hidden;
	display: grid;
	grid-template-columns: repeat(87, 15.717px);
	grid-template-rows: 89px;
}

.lane > * {
	grid-row: 1;
	position: relative;
	left: -76.6px;
}

.appt, .block {
	height: 83px;
	margin: 2px 3px 0 4px;
	border-radius: 3px;
	overflow: hidden;
	white-space: nowrap;
	color: #111;
}

.appt {
	padding: 5px 0 0 6px;
	background: #ffece3;
}

.cyan {
	background: #d1f8f7;
}

.bar-dark {
	border-top: 3px solid #5a5a5a;
}

.bar-pink {
	border-top: 3px solid #e37dc0;
}

.bar-blue {
	border-top: 3px solid #4fa3e8;
}

.line {
	display: flex;
	align-items: center;
	height: 14px;
	margin-left: -2px;
	padding-right: 6px;
	font-size: 8.200px;
	letter-spacing: -0.15px;
	color: #555;
}

.line time {
	flex: 1;
}

.line .dots {
	width: 4px;
	height: 14px;
	margin-left: 8px;
}

.notes {
	width: 12px;
	height: 12px;
}

.card {
	width: 12px;
	height: 10px;
	margin-right: 1px;
}

.card + .dots {
	margin-left: 6px;
}

.tags {
	display: flex;
	gap: 2px;
	height: 12px;
	margin: 7px 0 -7px;
}

.tags svg {
	width: 12px;
	height: 12px;
}

.tags .red {
	fill: #e3304b;
}

h3 {
	font-size: 11.500px;
	line-height: 14px;
	margin-top: 8px;
	letter-spacing: -0.14px;
}

.appt p {
	margin-top: 1px;
	font-size: 8.200px;
	font-weight: 700;
	line-height: 13px;
	color: #444;
	letter-spacing: -0.28px;
}

.down {
	position: absolute;
	right: 3px;
	bottom: 3px;
	width: 6px;
	height: 7px;
	color: #c4704e;
}

.cyan .down {
	color: #6b9a98;
}

.block {
	background: #8c8ecf;
	border: 1px solid #5b7dbd;
	padding: 8px 0 0 12px;
}

.block.wide {
	padding-top: 11px;
}

.block time {
	display: block;
	font-size: 8.200px;
	line-height: 12px;
	letter-spacing: -0.2px;
	color: #222;
}

.block h3 {
	margin-top: 1px;
	font-size: 10px;
	line-height: 13px;
}

.block em {
	display: block;
	font-size: 10.200px;
	line-height: 13px;
	color: #555;
}

.block small {
	position: absolute;
	left: 12px;
	bottom: 8px;
	font-size: 8.500px;
	line-height: 12px;
	color: #4b4b62;
}

.corner {
	position: absolute;
	right: 6px;
	bottom: 7px;
	display: flex;
	align-items: center;
	gap: 1px;
}

.swap {
	width: 11px;
	height: 11px;
}

.blocked {
	width: 14px;
	height: 14px;
}

.tick {
	width: 4px;
	height: 4px;
}

.block .top {
	position: absolute;
	right: 6px;
	top: 9px;
}

.free {
	align-self: end;
	justify-self: start;
	writing-mode: vertical-rl;
	transform: rotate(180deg);
	margin-bottom: 1px;
	font-size: 9.300px;
	line-height: 12px;
	color: #222;
}

.off {
	background: repeating-linear-gradient(135deg, #f7f7f7 0 5px, #dcdcdc 5px 6px);
}

/* scrollbars */
.hscroll {
	height: 13px;
	flex: none;
	margin-left: 102px;
	display: flex;
	align-items: center;
	background: #fafafa;
}

.thumb {
	background: #8b8b8b;
	border-radius: 4px;
}

.hscroll .thumb {
	width: 504px;
	height: 7px;
	margin: 0 323px 0 322px;
}

.tri {
	width: 0;
	height: 0;
	border: 4px solid transparent;
}

.left {
	border-left-width: 0;
	border-right: 5px solid #8b8b8b;
	margin-left: 5px;
}

.right {
	border-right-width: 0;
	border-left: 5px solid #8b8b8b;
}

.vscroll {
	width: 10px;
	display: flex;
	flex-direction: column;
	align-items: center;
	background: #f7f7f7;
	padding-top: 54px;
}

.up {
	border-top-width: 0;
	border-bottom: 5px solid #8b8b8b;
}

.bottom {
	margin-top: 138px;
	border-bottom-width: 0;
	border-top: 5px solid #8b8b8b;
}

.vscroll .thumb {
	width: 6px;
	height: 354px;
	margin-top: 5px;
}

/* right rail */
.side {
	width: 56px;
	border-left: 1px solid #ddd;
	padding-top: 10px;
	display: flex;
	flex-direction: column;
}

.side a {
	position: relative;
	height: 42.800px;
	flex: none;
	display: flex;
	flex-direction: column;
	align-items: center;
	gap: 5px;
	font-size: 8.200px;
	letter-spacing: -0.23px;
	line-height: 9px;
	text-align: center;
	white-space: nowrap;
	color: #222;
}

.side svg {
	width: 16px;
	height: 16px;
	fill: none;
	stroke: #555;
	stroke-width: .9;
}

.side .two {
	height: 52.500px;
	width: 40px;
	margin: 0 auto;
	white-space: normal;
}

.count {
	position: absolute;
	left: 31px;
	top: -8px;
	width: 15px;
	height: 15px;
	border-radius: 50%;
	background: #e0304a;
	color: #fff;
	line-height: 15px;
}

.side .legends {
	margin-top: 86px;
}

/* status bar */
footer {
	flex: 1;
	display: flex;
	align-items: center;
	padding-left: 11px;
	font-size: 8.600px;
	letter-spacing: -0.05px;
	color: #555;
}

footer span {
	margin-right: 13px;
}

footer b {
	margin-left: 3px;
	color: #444;
}

.register {
	padding-left: 13px;
	border-left: 1px solid #ddd;
	line-height: 17px;
}

.zoom {
	margin-left: auto;
	margin-right: 17px;
	display: flex;
	align-items: center;
}

.zoom svg {
	width: 12px;
	height: 12px;
	margin-right: 11px;
	fill: none;
	stroke: #555;
}

.step {
	display: flex;
	align-items: center;
	padding-left: 11px;
	line-height: 17px;
	border-left: 1px solid #ddd;
}

.step + .step {
	margin-left: 13px;
}

.step b {
	color: #222;
}

.minus, .plus {
	width: 7px;
	height: 7px;
	margin-left: 10px;
	background: linear-gradient(#3d7fb8, #3d7fb8) center / 7px 1px no-repeat;
}

.plus {
	margin-left: 12px;
	background: linear-gradient(#3d7fb8, #3d7fb8) center / 7px 1px no-repeat, linear-gradient(#3d7fb8, #3d7fb8) center / 1px 7px no-repeat;
}
```
